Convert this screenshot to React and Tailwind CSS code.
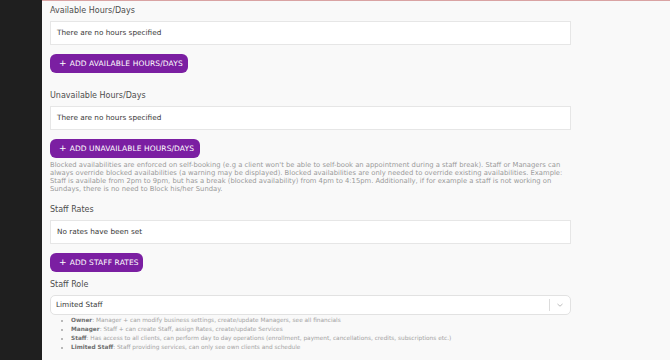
import React from "react";

const font = { fontFamily: '"DejaVu Sans", "Noto Sans", sans-serif' };

function Label({ children, className = "" }) {
  return (
    <div className={"h-[12px] text-[8px] leading-[12px] text-[#4d4d4d] " + className}>
      {children}
    </div>
  );
}

function Box({ children }) {
  return (
    <div className="mt-[4px] flex h-[24px] w-[521px] items-center border border-[#e6e6e6] bg-white pl-[6px] text-[7.3px] text-[#3a3a3a]">
      {children}
    </div>
  );
}

function Btn({ children, w }) {
  return (
    <div
      className={
        "mt-[9px] flex h-[19px] items-center gap-[3px] rounded-[6px] bg-[#7b1fa2] pl-[9px] text-[7.5px] tracking-[0.1px] text-white " +
        w
      }
    >
      <span className="text-[9px] leading-none">+</span>
      <span>{children}</span>
    </div>
  );
}

export default function App() {
  return (
    <div className="flex h-[360px] w-[670px] overflow-hidden" style={font}>
      <div className="w-[42px] shrink-0 bg-[#1f1f1f]" />
      <div className="flex-1 border-t border-[#d9a3a3] bg-[#f9f9f9] pl-[8px] pt-[4px]">
        <Label>Available Hours/Days</Label>
        <Box>There are no hours specified</Box>
        <Btn w="w-[138px]">ADD AVAILABLE HOURS/DAYS</Btn>

        <Label className="mt-[17px]">Unavailable Hours/Days</Label>
        <Box>There are no hours specified</Box>
        <Btn w="w-[150px]">ADD UNAVAILABLE HOURS/DAYS</Btn>

        <p className="mt-[3px] w-[516px] text-[6.8px] leading-[8px] text-[#9a9a9a]">
          Blocked availabilities are enforced on self-booking (e.g a client won't be able to self-book an appointment during a staff break). Staff or Managers can always override blocked availabilities (a warning may be displayed). Blocked availabilities are only needed to override existing availabilities. Example: Staff is available from 2pm to 9pm, but has a break (blocked availability) from 4pm to 4:15pm. Additionally, if for example a staff is not working on Sundays, there is no need to Block his/her Sunday.
        </p>

        <Label className="mt-[11px]">Staff Rates</Label>
        <Box>No rates have been set</Box>
        <Btn w="w-[93px]">ADD STAFF RATES</Btn>

        <Label className="mt-[7px]">Staff Role</Label>
        <div className="mt-[4px] flex h-[20px] w-[521px] items-center rounded-[5px] border border-[#e2e2e2] bg-white pl-[5px] text-[7.3px] text-[#3a3a3a]">
          <span className="flex-1">Limited Staff</span>
          <span className="h-[12px] w-px bg-[#dcdcdc]" />
          <svg width="10" height="10" viewBox="0 0 10 10" className="mx-[5px]">
            <path d="M2.5 4 L5 6.2 L7.5 4" fill="none" stroke="#b5b5b5" strokeWidth="0.9" />
          </svg>
        </div>
        <ul className="mt-[1px] list-disc pl-[21px] text-[5.8px] leading-[9px] text-[#a3a3a3]">
          <li><b className="text-[#6e6e6e]">Owner</b>: Manager + can modify business settings, create/update Managers, see all financials</li>
          <li><b className="text-[#6e6e6e]">Manager</b>: Staff + can create Staff, assign Rates, create/update Services</li>
          <li><b className="text-[#6e6e6e]">Staff</b>: Has access to all clients, can perform day to day operations (enrollment, payment, cancellations, credits, subscriptions etc.)</li>
          <li><b className="text-[#6e6e6e]">Limited Staff</b>: Staff providing services, can only see own clients and schedule</li>
        </ul>
      </div>
    </div>
  );
}
